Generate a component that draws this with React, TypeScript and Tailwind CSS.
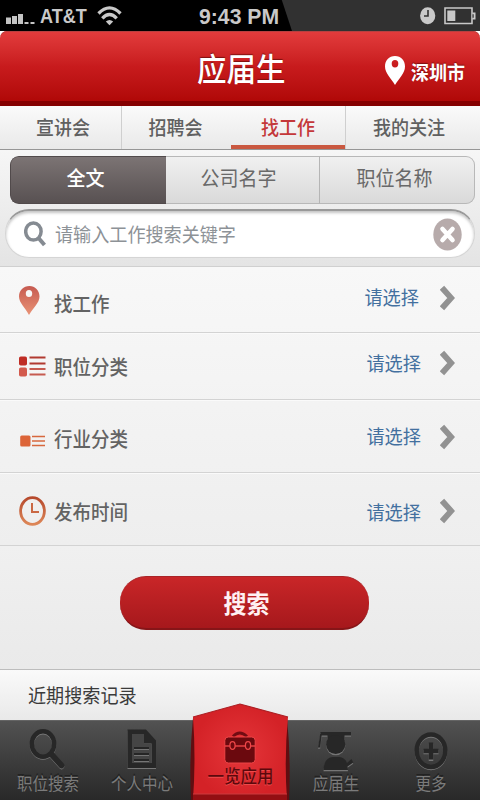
import type { ReactNode } from "react";

const cjk = "font-['Noto_Sans_CJK_SC','Noto_Sans',sans-serif]";

// Slightly condensed one-line label, as the device's font draws it.
function Label({ children, className = "" }: { children: ReactNode; className?: string }) {
  return (
    <span className={`inline-block origin-center scale-y-[1.08] whitespace-nowrap leading-6 ${className}`}>{children}</span>
  );
}

function StatusBar() {
  return (
    <div className="flex h-[31px] items-start bg-[#313131] font-['Liberation_Sans',Arial,sans-serif] text-[#c9c9c9]">
      <div
        className="flex h-[31px] w-[292px] items-start bg-black"
        style={{ clipPath: "polygon(0 0, 96.5% 0, 100% 100%, 0 100%)" }}
      >
        <svg className="ml-[6px] mt-[13px] h-[12px] w-[30px] shrink-0" viewBox="0 0 30 12" fill="#c4c4c4">
          <path d="M0 4.500h5v6.500H0zM6 3h5v8H6zM12 1h5v10h-5zM18.500 9h4v2h-4zM24.500 9h4v2h-4z" />
        </svg>
        <span className="ml-[4px] w-[48px] shrink-0 whitespace-nowrap pt-[5px] text-[19px] leading-6 font-bold">
          <span className="inline-block origin-left scale-x-[0.95] scale-y-[1.08]">AT&amp;T</span>
        </span>
        <svg className="ml-[9px] mt-[6px] h-[20px] w-[25px] shrink-0" viewBox="0 0 25 20" fill="none" stroke="#c9c9c9" strokeWidth="3.300">
          <path d="M1.500 7.500Q12.500-3.700 23.500 7.500M5.300 12.300Q12.500 4.700 19.700 12.300" />
          <path d="M8.800 15.600Q12.500 12.200 16.200 15.600L12.500 19.300Z" fill="#c9c9c9" stroke="none" />
        </svg>
        <span className="ml-[77px] whitespace-nowrap pt-[4px] text-[20px] leading-6 font-bold">
          <span className="inline-block origin-left scale-x-[1.06] scale-y-[1.12]">9:43 PM</span>
        </span>
      </div>
      <svg className="ml-[128px] mt-[7px] h-[18px] w-[16px]" viewBox="0 0 16 18">
        <ellipse cx="7.700" cy="8.800" rx="7.600" ry="8.500" fill="#c9c9c9" />
        <path d="M8 3v6H4" fill="none" stroke="#313131" strokeWidth="1.600" />
      </svg>
      <svg className="ml-[8px] mt-[7px] h-[18px] w-[32px]" viewBox="0 0 32 18">
        <path d="M1 1h27v15.500H1z" fill="none" stroke="#c9c9c9" strokeWidth="1.600" />
        <path d="M3.300 3.500h8v10.500h-8zM28.500 5.500h3v7h-3z" fill="#c9c9c9" />
        <path d="M28.500 7.200h1.200v3.600h-1.200z" fill="#313131" />
      </svg>
    </div>
  );
}

function Header() {
  return (
    <div className="h-[75px] bg-white">
      <header className="flex h-[75px] rounded-t-[7px] border-b-[5px] border-[#850000] bg-linear-to-b from-[#e33c3d] via-[#c81b1d] to-[#b00807] text-white shadow-[inset_0_1px_0_#b84040]">
        <h1 className="h-[60px] w-[385px] pl-[197px] pt-[24px] text-[29.500px] leading-6 font-medium [text-shadow:0_-1px_1px_#7c1010]">
          <Label className="scale-y-[1.06]">应届生</Label>
        </h1>
        <svg className="mt-[25px] h-[30px] w-[20px]" viewBox="0 0 20 30">
          <path fillRule="evenodd" fill="#fff" d="M10 0C4 0 0 4.600 0 10.400C0 17 6 22 10 29C14 22 20 17 20 10.400C20 4.600 16 0 10 0ZM10 4a3.300 3.700 0 1 1 0 7.400a3.300 3.700 0 1 1 0-7.400Z" />
        </svg>
        <Label className="ml-[6px] mt-[28px] h-6 text-[18px] font-bold [text-shadow:0_-1px_1px_#7c1010]">深圳市</Label>
      </header>
    </div>
  );
}

function Tabs() {
  const base = "flex h-[43px] justify-center pt-[9px] text-[18px] ";
  return (
    <nav className="flex h-[44px] border-b border-[#969696] bg-linear-to-b from-[#fafafa] to-[#e9e9e9] font-medium text-[#606060]">
      <div className={base + "w-[121px] pl-[5px]"}><Label>宣讲会</Label></div>
      <div className={base + "w-[110px] border-l border-[#cfcfcf] pr-[2px]"}><Label>招聘会</Label></div>
      <div className={base + "w-[114px] border-b-4 border-[#c95840] text-[#c4383a]"}><Label>找工作</Label></div>
      <div className={base + "w-[135px] border-l border-[#cfcfcf] pr-[8px]"}><Label>我的关注</Label></div>
    </nav>
  );
}

function SearchPanel() {
  const seg = "flex justify-center pt-[10px] text-[19px] ";
  return (
    <section className="h-[117px] border-b border-[#d0d0d0] bg-linear-to-b from-[#f6f6f6] to-[#e4e4e4] px-[5px] pt-[6px]">
      <div className="ml-[5px] flex h-[48px] overflow-hidden rounded-[9px] bg-linear-to-b from-[#f1f1f1] to-[#d9d9d9] text-[#696969] shadow-[inset_0_0_0_1px_#b8b8b8]">
        <div className={seg + "w-[156px] rounded-l-[8px] border border-r-0 border-[#514a4b] bg-linear-to-b from-[#7c7474] to-[#585152] pr-[6px] font-medium text-white"}><Label className="-mt-[1px]">全文</Label></div>
        <div className={seg + "w-[153px] pr-[8px]"}><Label>公司名字</Label></div>
        <div className={seg + "grow border-l border-[#b5b5b5] pr-[6px]"}><Label>职位名称</Label></div>
      </div>
      <div className="mt-[5px] flex h-[49px] rounded-[24px] border-t-2 border-x border-b border-[#d5d5d5] border-t-[#999999] bg-white shadow-[inset_0_2px_3px_#c3c3c3]">
        <svg className="ml-[18px] mt-[10px] h-[27px] w-[23px]" viewBox="0 0 23 27" fill="none" stroke="#858b92">
          <ellipse cx="9.400" cy="10.500" rx="7.700" ry="8.600" strokeWidth="3.500" />
          <path d="M14.500 17L20.500 24" strokeWidth="4" />
        </svg>
        <Label className="ml-[8px] mt-[10px] h-6 grow text-[18.100px] text-[#8d9297]">请输入工作搜索关键字</Label>
        <svg className="mr-[12px] mt-[7px] h-[33px] w-[29px]" viewBox="0 0 29 33">
          <ellipse cx="14.500" cy="16.500" rx="14.200" ry="16" fill="#b7abab" />
          <path d="M9.500 11L19.500 22M19.500 11L9.500 22" stroke="#fff" strokeWidth="4.600" strokeLinecap="round" />
        </svg>
      </div>
    </section>
  );
}

function PinIcon() {
  return (
    <svg className="h-[29px] w-[21px]" viewBox="0 0 21 29">
      <defs><linearGradient id="pin" x2="0" y2="1"><stop stopColor="#c65a50" /><stop offset="1" stopColor="#e99376" /></linearGradient></defs>
      <path fillRule="evenodd" fill="url(#pin)" d="M10.500 0C4.500 0 0 4.500 0 10.500C0 17 6.500 22 10 29C14 22 20.500 17 20.500 10.500C20.500 4.500 16 0 10.500 0ZM10 4a3.200 3.500 0 1 1 0 7a3.200 3.500 0 1 1 0-7Z" />
    </svg>
  );
}

function GridIcon() {
  return (
    <svg className="h-[21px] w-[27px]" viewBox="0 0 27 21">
      <rect y=".5" width="8" height="9" rx="1.800" fill="#bf2d25" />
      <rect y="11.500" width="8" height="9" rx="1.800" fill="#d35a4d" />
      <path d="M10.500 1.500H26.500M10.500 7.500H26.500" stroke="#b13a31" strokeWidth="2.200" />
      <path d="M10.500 13H26.500M10.500 18.500H26.500" stroke="#c65b50" strokeWidth="2.200" />
    </svg>
  );
}

function ItemIcon() {
  return (
    <svg className="ml-[1px] h-[12px] w-[26px]" viewBox="0 0 26 12">
      <rect x=".2" y=".5" width="10.300" height="11" rx="1.500" fill="#dc6438" />
      <path d="M12 1.500H25M12 6H25M12 10.500H25" stroke="#d7683e" strokeWidth="1.600" />
    </svg>
  );
}

function ClockIcon() {
  return (
    <svg className="h-[30px] w-[27px]" viewBox="0 0 27 30" fill="none">
      <defs><linearGradient id="clk" x2="0" y2="1"><stop stopColor="#b6492c" /><stop offset="1" stopColor="#dd8758" /></linearGradient></defs>
      <ellipse cx="13.500" cy="15" rx="11.900" ry="13.400" stroke="url(#clk)" strokeWidth="2.800" />
      <path d="M13 7v9h7" stroke="#ca6844" strokeWidth="2" />
    </svg>
  );
}

type Row = { label: string; icon: ReactNode; box: string; iconTop: string; labelTop: string; valueTop: string; chevTop: string };

const rows: Row[] = [
  { label: "找工作", icon: <PinIcon />, box: "h-[66px]", iconTop: "mt-[19px]", labelTop: "mt-[24px]", valueTop: "mt-[17px] mr-[2px]", chevTop: "mt-[18px]" },
  { label: "职位分类", icon: <GridIcon />, box: "h-[67px]", iconTop: "mt-[23px]", labelTop: "mt-[21px]", valueTop: "mt-[17px]", chevTop: "mt-[17px]" },
  { label: "行业分类", icon: <ItemIcon />, box: "h-[73px]", iconTop: "mt-[35px]", labelTop: "mt-[26px]", valueTop: "mt-[23px]", chevTop: "mt-[24px]" },
  { label: "发布时间", icon: <ClockIcon />, box: "h-[73px]", iconTop: "mt-[23px]", labelTop: "mt-[26px]", valueTop: "mt-[26px]", chevTop: "mt-[25px]" },
];

function Filters() {
  return (
    <ul className="bg-linear-to-b from-[#f8f8f8] to-[#eeeeee]">
      {rows.map((r) => (
        <li key={r.label} className={`flex items-start border-b border-[#d3d3d3] pl-[19px] pr-[25px] shadow-[0_1px_0_#fafafa] ${r.box}`}>
          <div className={`w-[35px] shrink-0 ${r.iconTop}`}>{r.icon}</div>
          <Label className={`grow text-[18.500px] font-medium text-[#636363] ${r.labelTop}`}>{r.label}</Label>
          <Label className={`text-[18.200px] text-[#43709f] ${r.valueTop}`}>请选择</Label>
          <svg className={`ml-[19px] h-[26px] w-[15px] ${r.chevTop}`} viewBox="0 0 15 26">
            <path d="M2 2.800L11.200 13L2 23.200" fill="none" stroke="#929292" strokeWidth="5.800" />
          </svg>
        </li>
      ))}
    </ul>
  );
}

function MagnifierIcon() {
  return (
    <svg className="h-[42px] w-[38px]" viewBox="0 0 38 42" fill="none">
      <g stroke="#777777"><ellipse cx="14" cy="17" rx="11.200" ry="12.700" strokeWidth="4.200" /><path d="M23.500 28.500l9 10" strokeWidth="5.500" strokeLinecap="round" /></g>
      <g stroke="#272727"><ellipse cx="14" cy="16" rx="11.200" ry="12.700" strokeWidth="4.500" /><path d="M23.500 27.500l9 10" strokeWidth="5.800" strokeLinecap="round" /></g>
    </svg>
  );
}

function DocumentIcon() {
  return (
    <svg className="h-[42px] w-[30px]" viewBox="0 0 30 42">
      <path d="M.5 2.500H19L29 14V41H.5z" fill="#777" />
      <path fillRule="evenodd" d="M.5 1.500H19L29 12.500V40H.5zM5 6V35H24.500V15.500H17V6z" fill="#272727" />
      <path d="M5 6H17V15.500H24.500V35H5z" fill="#454545" />
      <path d="M7 20H22M7 26H22M7 32H22" stroke="#252525" strokeWidth="2" />
      <path d="M7 21.500H22M7 27.500H22M7 33.500H22" stroke="#757575" />
    </svg>
  );
}

function CaseIcon() {
  return (
    <svg className="h-[33px] w-[32px]" viewBox="0 0 32 33">
      <path d="M9 5.500Q15.500-1.500 23 5.500" fill="none" stroke="#710c12" strokeWidth="2.800" />
      <rect x=".8" y="6" width="30.400" height="26" rx="3.500" fill="#6b090e" stroke="#ee4547" strokeWidth="1" />
      <path d="M1 15H31" stroke="#ee4547" strokeWidth="1.400" />
      <g fill="#6b090e" stroke="#ed4648" strokeWidth="1.300"><ellipse cx="8.500" cy="14.500" rx="2.600" ry="3.800" /><ellipse cx="24" cy="14.500" rx="2.600" ry="3.800" /></g>
    </svg>
  );
}

function GraduateShape() {
  return (
    <>
      <path d="M2.500 0H33V3.500H2.500z" />
      <path d="M9.500 2H26.500V9H9.500z" />
      <ellipse cx="17.700" cy="12.500" rx="9.600" ry="9.500" />
      <path d="M2.200 2H3.800L2.200 15.500H0z" />
      <path d="M5.500 38Q6 25.500 15 25H21Q27 25.500 29 31L33.500 27L35.300 30.500L29.500 34.500L30 38z" />
    </>
  );
}

function GraduateIcon() {
  return (
    <svg className="h-[40px] w-[36px]" viewBox="0 0 36 40">
      <g fill="#757575" transform="translate(0 1.200)"><GraduateShape /></g>
      <g fill="#272727"><GraduateShape /></g>
    </svg>
  );
}

function PlusIcon() {
  return (
    <svg className="h-[39px] w-[34px]" viewBox="0 0 34 39" fill="none">
      <ellipse cx="17" cy="20" rx="14.300" ry="16.200" stroke="#777" strokeWidth="4" />
      <ellipse cx="17" cy="18.700" rx="14.300" ry="16.200" stroke="#272727" strokeWidth="4.500" />
      <path d="M9.500 20H24.500M17 11.500V29" stroke="#777" strokeWidth="4.500" />
      <path d="M9.500 19H24.500M17 10.500V27.500" stroke="#272727" strokeWidth="4.500" />
    </svg>
  );
}

function BottomNav() {
  const name = "text-[15.500px] text-[#7b7b7b] [text-shadow:0_-1px_0_#222]";
  return (
    <nav className="relative flex h-[80px] border-t border-[#646464] bg-linear-to-b from-[#525252] to-[#292929]">
      <div className="flex w-[96px] flex-col items-center pt-[7px]"><MagnifierIcon /><Label className={name}>职位搜索</Label></div>
      <div className="flex w-[94px] flex-col items-center pt-[7px] pr-[2px]"><DocumentIcon /><Label className={name}>个人中心</Label></div>
      <div className="w-[100px]" />
      <div className="flex w-[92px] flex-col items-center pt-[11px]"><GraduateIcon /><Label className={`${name} -mt-[2px]`}>应届生</Label></div>
      <div className="flex w-[98px] flex-col items-center pt-[11px]"><PlusIcon /><Label className={`${name} -mt-[1px]`}>更多</Label></div>
      {/* Raised centre tab that overlaps the history strip */}
      <div className="absolute bottom-0 left-[190px] flex h-[98px] w-[100px] flex-col items-center">
        <svg className="absolute inset-0 h-full w-full" viewBox="0 0 100 98">
          <defs><radialGradient id="tab"><stop stopColor="#e5363a" /><stop offset="1" stopColor="#d42227" /></radialGradient></defs>
          <path d="M3 16Q-1 56 1 98H99Q101 56 97 16z" fill="#600e11" />
          <path d="M3 15L50 2L98 15Q94 56 97 98H3Q6 56 3 15z" fill="url(#tab)" />
          <path d="M3 15L50 2L98 15" fill="none" stroke="#ad2025" strokeWidth="1.200" />
          <path d="M3 92H97V98H3z" fill="#930f13" />
          <path d="M3 92H97" stroke="#cc3b3e" />
        </svg>
        <div className="relative mt-[29px] flex flex-col items-center">
          <CaseIcon />
          <Label className="-mt-[1px] ml-[1px] text-[16.500px] font-medium text-[#5c080c] [text-shadow:0_1px_0_#ed4b4b]">一览应用</Label>
        </div>
      </div>
    </nav>
  );
}

export default function App() {
  return (
    <main className={`flex h-[800px] w-[480px] flex-col overflow-hidden bg-[#ededed] ${cjk}`}>
      <StatusBar />
      <Header />
      <Tabs />
      <SearchPanel />
      <Filters />
      <div className="flex h-[123px] items-start bg-linear-to-b from-[#f0f0f0] to-[#eaeaea] pl-[120px] pt-[30px]">
        <button className="flex h-[54px] w-[249px] justify-center rounded-[26px] border-t border-b-2 border-t-[#a92427] border-b-[#861518] bg-linear-to-b from-[#c92628] to-[#a6181c] pl-[4px] pt-[14px] text-[23px] font-bold text-[#fff0f2]">
          <Label className="scale-y-100">搜索</Label>
        </button>
      </div>
      <div className="h-[51px] border-t border-[#bdbdbd] bg-linear-to-b from-[#fafafa] to-[#e9e9e9] pl-[28px] pt-[12px] text-[18.100px] leading-6 text-[#3b3b3b]">
        <Label>近期搜索记录</Label>
      </div>
      <BottomNav />
    </main>
  );
}
